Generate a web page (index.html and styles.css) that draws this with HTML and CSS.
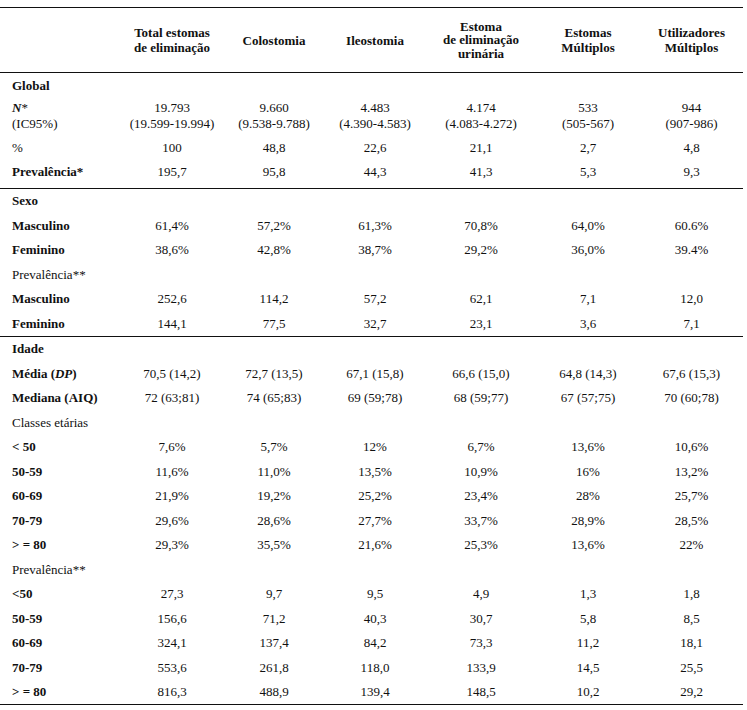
FILE: index.html
```html
<!DOCTYPE html>
<html lang="pt">
<head>
<meta charset="utf-8">
<title>Estomas de eliminação</title>
<link rel="stylesheet" href="styles.css">
</head>
<body>
<table class="data">
  <colgroup>
    <col class="c-label">
    <col class="c1"><col class="c2"><col class="c3"><col class="c4"><col class="c5"><col class="c6">
  </colgroup>
  <thead>
    <tr class="head">
      <th></th>
      <th>Total estomas<br>de eliminação</th>
      <th>Colostomia</th>
      <th>Ileostomia</th>
      <th class="tight">Estoma<br>de eliminação<br>urinária</th>
      <th>Estomas<br>Múltiplos</th>
      <th>Utilizadores<br>Múltiplos</th>
    </tr>
  </thead>
  <tbody class="section">
    <tr class="first"><td class="lab b">Global</td><td></td><td></td><td></td><td></td><td></td><td></td></tr>
    <tr class="double">
      <td class="lab"><b><i>N</i></b>*<br>(IC95%)</td>
      <td>19.793<br>(19.599-19.994)</td>
      <td>9.660<br>(9.538-9.788)</td>
      <td>4.483<br>(4.390-4.583)</td>
      <td>4.174<br>(4.083-4.272)</td>
      <td>533<br>(505-567)</td>
      <td>944<br>(907-986)</td>
    </tr>
    <tr><td class="lab">%</td><td>100</td><td>48,8</td><td>22,6</td><td>21,1</td><td>2,7</td><td>4,8</td></tr>
    <tr class="last tall"><td class="lab b">Prevalência*</td><td>195,7</td><td>95,8</td><td>44,3</td><td>41,3</td><td>5,3</td><td>9,3</td></tr>
  </tbody>
  <tbody class="section">
    <tr><td class="lab b">Sexo</td><td></td><td></td><td></td><td></td><td></td><td></td></tr>
    <tr><td class="lab b">Masculino</td><td>61,4%</td><td>57,2%</td><td>61,3%</td><td>70,8%</td><td>64,0%</td><td>60.6%</td></tr>
    <tr><td class="lab b">Feminino</td><td>38,6%</td><td>42,8%</td><td>38,7%</td><td>29,2%</td><td>36,0%</td><td>39.4%</td></tr>
    <tr><td class="lab">Prevalência**</td><td></td><td></td><td></td><td></td><td></td><td></td></tr>
    <tr><td class="lab b">Masculino</td><td>252,6</td><td>114,2</td><td>57,2</td><td>62,1</td><td>7,1</td><td>12,0</td></tr>
    <tr class="last"><td class="lab b">Feminino</td><td>144,1</td><td>77,5</td><td>32,7</td><td>23,1</td><td>3,6</td><td>7,1</td></tr>
  </tbody>
  <tbody class="section">
    <tr><td class="lab b">Idade</td><td></td><td></td><td></td><td></td><td></td><td></td></tr>
    <tr><td class="lab b">Média (<i>DP</i>)</td><td>70,5 (14,2)</td><td>72,7 (13,5)</td><td>67,1 (15,8)</td><td>66,6 (15,0)</td><td>64,8 (14,3)</td><td>67,6 (15,3)</td></tr>
    <tr><td class="lab b">Mediana (AIQ)</td><td>72 (63;81)</td><td>74 (65;83)</td><td>69 (59;78)</td><td>68 (59;77)</td><td>67 (57;75)</td><td>70 (60;78)</td></tr>
    <tr><td class="lab">Classes etárias</td><td></td><td></td><td></td><td></td><td></td><td></td></tr>
    <tr><td class="lab b">&lt; 50</td><td>7,6%</td><td>5,7%</td><td>12%</td><td>6,7%</td><td>13,6%</td><td>10,6%</td></tr>
    <tr><td class="lab b">50-59</td><td>11,6%</td><td>11,0%</td><td>13,5%</td><td>10,9%</td><td>16%</td><td>13,2%</td></tr>
    <tr><td class="lab b">60-69</td><td>21,9%</td><td>19,2%</td><td>25,2%</td><td>23,4%</td><td>28%</td><td>25,7%</td></tr>
    <tr><td class="lab b">70-79</td><td>29,6%</td><td>28,6%</td><td>27,7%</td><td>33,7%</td><td>28,9%</td><td>28,5%</td></tr>
    <tr><td class="lab b">&gt; = 80</td><td>29,3%</td><td>35,5%</td><td>21,6%</td><td>25,3%</td><td>13,6%</td><td>22%</td></tr>
    <tr><td class="lab">Prevalência**</td><td></td><td></td><td></td><td></td><td></td><td></td></tr>
    <tr><td class="lab b">&lt;50</td><td>27,3</td><td>9,7</td><td>9,5</td><td>4,9</td><td>1,3</td><td>1,8</td></tr>
    <tr><td class="lab b">50-59</td><td>156,6</td><td>71,2</td><td>40,3</td><td>30,7</td><td>5,8</td><td>8,5</td></tr>
    <tr><td class="lab b">60-69</td><td>324,1</td><td>137,4</td><td>84,2</td><td>73,3</td><td>11,2</td><td>18,1</td></tr>
    <tr><td class="lab b">70-79</td><td>553,6</td><td>261,8</td><td>118,0</td><td>133,9</td><td>14,5</td><td>25,5</td></tr>
    <tr class="last"><td class="lab b">&gt; = 80</td><td>816,3</td><td>488,9</td><td>139,4</td><td>148,5</td><td>10,2</td><td>29,2</td></tr>
  </tbody>
</table>
</body>
</html>
```

FILE: styles.css
```css
html, body {
  background: #ffffff;
}

body {
  margin: 0;
  padding-top: 7px;
  font-family: "Liberation Serif", "Times New Roman", serif;
  font-size: 13px;
  color: #111111;
}

.data {
  width: 743px;
  border-collapse: collapse;
  table-layout: fixed;
}

.c-label { width: 120px; }
.c1 { width: 104px; }
.c2 { width: 100px; }
.c3 { width: 102px; }
.c4 { width: 110px; }
.c5 { width: 104px; }
.c6 { width: 103px; }

.head th {
  height: 64px;
  padding: 0 2px;
  font-weight: bold;
  line-height: 15px;
  text-align: center;
  vertical-align: middle;
  border-top: 1px solid #111;
  border-bottom: 1px solid #111;
}

.head th.tight {
  line-height: 13.5px;
}

.data td {
  height: 24.5px;
  padding: 0;
  line-height: 15px;
  text-align: center;
  vertical-align: middle;
  white-space: nowrap;
}

.data td.lab {
  text-align: left;
  padding-left: 12px;
}

.data td.b {
  font-weight: bold;
}

.data tr.first td {
  height: 24px;
}

.data tr.double td {
  height: 35px;
  vertical-align: top;
  padding-top: 3px;
  line-height: 16px;
}

.data tr.tall td {
  height: 24px;
  padding-bottom: 4px;
}

.data tr.last td {
  border-bottom: 1px solid #111;
}
```
